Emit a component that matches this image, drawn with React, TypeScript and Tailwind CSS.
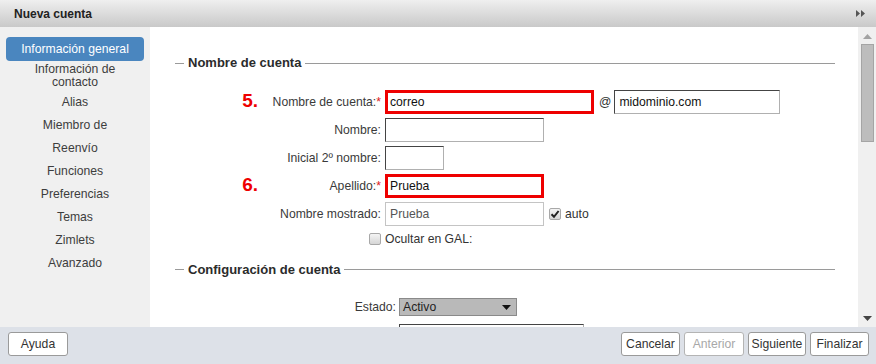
import React from 'react';

const sideItems = ['Alias', 'Miembro de', 'Reenvío', 'Funciones', 'Preferencias', 'Temas', 'Zimlets', 'Avanzado'];

function Legend({ text }: { text: string }) {
  return (
    <div className="flex items-center h-[16px]">
      <div className="h-px w-[9px] bg-[#9a9a9a]" />
      <span className="px-[4px] text-[13px] font-bold text-[#2b2b2b]">{text}</span>
      <div className="h-px flex-1 bg-[#9a9a9a]" />
    </div>
  );
}

function Marker({ n }: { n: string }) {
  return <span className="text-[19px] font-bold text-[#ee0000] leading-none">{n}</span>;
}

function Label({ text, req }: { text: string; req?: boolean }) {
  return (
    <span className="text-[#3a3a3a]">
      {text}
      {req && <span className="text-[#d22]">*</span>}
    </span>
  );
}

function Check({ checked }: { checked?: boolean }) {
  return (
    <span className="inline-flex w-[12px] h-[12px] items-center justify-center rounded-[2px] border border-[#a8a8a8] bg-gradient-to-b from-[#f4f4f4] to-[#d6d6d6]">
      {checked && (
        <svg width="10" height="10" viewBox="0 0 10 10">
          <path d="M1.5 5.2 L4 7.8 L8.6 2" fill="none" stroke="#222" strokeWidth="2" />
        </svg>
      )}
    </span>
  );
}

const inputCls =
  'h-[24px] bg-white border border-t-[#444] border-l-[#444] border-r-[#b0b0b0] border-b-[#b0b0b0] px-[4px] flex items-center text-[#111]';
const redCls = 'h-[24px] bg-white border-[3px] border-[#ee0000] px-[2px] flex items-center text-[#111]';

export default function App() {
  return (
    <div className="w-[876px] h-[364px] flex flex-col overflow-hidden text-[12.2px] font-['Liberation_Sans',Arial,sans-serif]">
      {/* title bar */}
      <div className="h-[27px] flex items-center justify-between pl-[14px] pr-[11px] bg-gradient-to-b from-[#efefef] to-[#c9c9c9]">
        <span className="text-[12px] font-bold text-[#222]">Nueva cuenta</span>
        <svg width="9" height="7" viewBox="0 0 9 7">
          <path d="M0 0 L4 3.5 L0 7Z M5 0 L9 3.5 L5 7Z" fill="#555" />
        </svg>
      </div>

      {/* body */}
      <div className="h-[300px] flex">
        <div className="w-[150px] bg-[#f0f0f0] pt-[10px] px-[6px] flex flex-col text-center text-[#3d3d3d]">
          <div className="h-[24px] rounded-[4px] bg-[#4a86bf] text-white flex items-center justify-center">
            Información general
          </div>
          <div className="py-[2px] leading-[13px]">
            Información de
            <br />
            contacto
          </div>
          {sideItems.map((s) => (
            <div key={s} className="h-[23px] flex items-center justify-center">
              {s}
            </div>
          ))}
        </div>

        <div className="flex-1 bg-white overflow-hidden pl-[25px] pr-[23px] pt-[28px]">
          <Legend text="Nombre de cuenta" />
          <div className="mt-[19px] grid grid-cols-[83px_127px_1fr] gap-y-[4px] items-center">
            <div className="text-right"><Marker n="5." /></div>
            <div className="text-right pr-[4px]"><Label text="Nombre de cuenta:" req /></div>
            <div className="flex items-center">
              <div className={`${redCls} w-[209px]`}>correo</div>
              <span className="ml-[5px] mr-[3px] text-[#333]">@</span>
              <div className={`${inputCls} w-[166px]`}>midominio.com</div>
            </div>

            <div />
            <div className="text-right pr-[4px]"><Label text="Nombre:" /></div>
            <div className={`${inputCls} w-[159px]`} />

            <div />
            <div className="text-right pr-[4px]"><Label text="Inicial 2º nombre:" /></div>
            <div className={`${inputCls} w-[59px]`} />

            <div className="text-right"><Marker n="6." /></div>
            <div className="text-right pr-[4px]"><Label text="Apellido:" req /></div>
            <div className={`${redCls} w-[159px]`}>Prueba</div>

            <div />
            <div className="text-right pr-[4px]"><Label text="Nombre mostrado:" /></div>
            <div className="flex items-center">
              <div className="h-[24px] w-[159px] border border-[#c4c4c4] px-[4px] flex items-center text-[#555]">Prueba</div>
              <span className="ml-[5px] mr-[4px] flex"><Check checked /></span>
              <span className="text-[#333]">auto</span>
            </div>

            <div />
            <div className="flex justify-end pr-[4px] h-[14px] items-center"><Check /></div>
            <div className="text-[#333]">Ocultar en GAL:</div>
          </div>

          <div className="mt-[13px]">
            <Legend text="Configuración de cuenta" />
          </div>
          <div className="mt-[21px] grid grid-cols-[221px_1fr] gap-x-[3px] gap-y-[7px] items-center">
            <div className="text-right text-[#3a3a3a]">Estado:</div>
            <div className="h-[18px] w-[118px] bg-[#b9b9b9] border border-[#8a8a8a] flex items-center justify-between pl-[3px] pr-[5px] text-[#222]">
              <span>Activo</span>
              <svg width="9" height="5" viewBox="0 0 9 5">
                <path d="M0 0 L9 0 L4.5 5Z" fill="#111" />
              </svg>
            </div>
            <div />
            <div className={`${inputCls} w-[185px] border-[#bbb]`} />
          </div>
        </div>

        {/* scrollbar */}
        <div className="w-[18px] bg-[#f0f0f0] flex flex-col items-center pt-[7px] pb-[6px]">
          <svg width="9" height="5" viewBox="0 0 9 5">
            <path d="M0 5 L9 5 L4.5 0Z" fill="#a3a3a3" />
          </svg>
          <div className="mt-[5px] w-[13px] h-[98px] bg-[#bdbdbd] border border-[#a5a5a5]" />
          <div className="flex-1" />
          <svg width="9" height="5" viewBox="0 0 9 5">
            <path d="M0 0 L9 0 L4.5 5Z" fill="#444" />
          </svg>
        </div>
      </div>

      {/* footer */}
      <div className="h-[37px] bg-[#dde1e8] flex items-start justify-between pt-[5px] pl-[8px] pr-[7px]">
        <button className="h-[24px] w-[60px] rounded-[3px] border border-[#9a9a9a] bg-white text-[#333]">Ayuda</button>
        <div className="flex gap-[4px]">
          <button className="h-[24px] w-[59px] rounded-[3px] border border-[#9a9a9a] bg-white text-[#333]">Cancelar</button>
          <button className="h-[24px] w-[60px] rounded-[3px] border border-[#b4b4b4] bg-white text-[#a8a8a8]">Anterior</button>
          <button className="h-[24px] w-[58px] rounded-[3px] border border-[#9a9a9a] bg-white text-[#333]">Siguiente</button>
          <button className="h-[24px] w-[59px] rounded-[3px] border border-[#9a9a9a] bg-white text-[#333]">Finalizar</button>
        </div>
      </div>
    </div>
  );
}
